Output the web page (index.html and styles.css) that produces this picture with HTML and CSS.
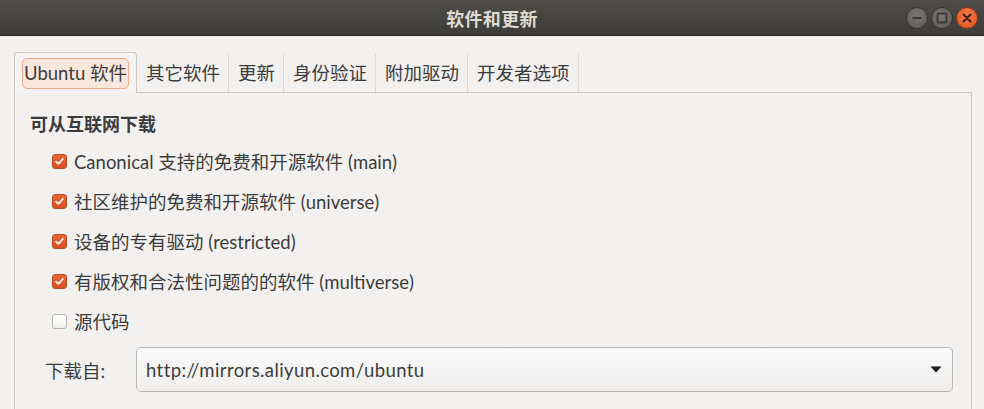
FILE: index.html
```html
<!DOCTYPE html>
<html lang="zh-CN">
<head>
<meta charset="utf-8">
<title>软件和更新</title>
<link rel="stylesheet" href="styles.css">
</head>
<body>
<div class="window">
  <header class="titlebar">
    <span class="title">软件和更新</span>
    <div class="wbuttons">
      <span class="wbtn min"><svg width="20" height="20" viewBox="0 0 20 20"><rect x="5.5" y="9" width="9" height="2" fill="#3a3935"/></svg></span>
      <span class="wbtn max"><svg width="20" height="20" viewBox="0 0 20 20"><rect x="5.5" y="5.5" width="9" height="9" rx="1" fill="none" stroke="#3a3935" stroke-width="1.8"/></svg></span>
      <span class="wbtn close"><svg width="20" height="20" viewBox="0 0 20 20"><path d="M6.5 6.5 L13.5 13.5 M13.5 6.5 L6.5 13.5" stroke="#3b2016" stroke-width="2" stroke-linecap="round"/></svg></span>
    </div>
  </header>
  <main class="content">
    <nav class="tabs">
      <div class="tab active"><span class="focus">Ubuntu 软件</span></div>
      <div class="tab">其它软件</div>
      <div class="tab">更新</div>
      <div class="tab">身份验证</div>
      <div class="tab">附加驱动</div>
      <div class="tab">开发者选项</div>
    </nav>
    <section class="panel">
      <h2 class="heading">可从互联网下载</h2>
      <label class="row"><span class="cb checked"><svg width="15" height="15" viewBox="0 0 15 15"><path d="M3.6 7.6 L6.2 10.2 L11.4 4.6" fill="none" stroke="#fff" stroke-width="2" stroke-linecap="round" stroke-linejoin="round"/></svg></span>Canonical 支持的免费和开源软件 (main)</label>
      <label class="row"><span class="cb checked"><svg width="15" height="15" viewBox="0 0 15 15"><path d="M3.6 7.6 L6.2 10.2 L11.4 4.6" fill="none" stroke="#fff" stroke-width="2" stroke-linecap="round" stroke-linejoin="round"/></svg></span>社区维护的免费和开源软件 (universe)</label>
      <label class="row"><span class="cb checked"><svg width="15" height="15" viewBox="0 0 15 15"><path d="M3.6 7.6 L6.2 10.2 L11.4 4.6" fill="none" stroke="#fff" stroke-width="2" stroke-linecap="round" stroke-linejoin="round"/></svg></span>设备的专有驱动 (restricted)</label>
      <label class="row"><span class="cb checked"><svg width="15" height="15" viewBox="0 0 15 15"><path d="M3.6 7.6 L6.2 10.2 L11.4 4.6" fill="none" stroke="#fff" stroke-width="2" stroke-linecap="round" stroke-linejoin="round"/></svg></span>有版权和合法性问题的的软件 (multiverse)</label>
      <label class="row"><span class="cb"></span>源代码</label>
      <div class="source">
        <span class="src-label">下载自:</span>
        <div class="combo">
          <span class="combo-text">http://mirrors.aliyun.com/ubuntu</span>
          <svg class="arrow" width="12" height="7" viewBox="0 0 12 7"><path d="M0.5 0.5 H11.5 L6 6.5 Z" fill="#1a1a1a"/></svg>
        </div>
      </div>
    </section>
  </main>
</div>
</body>
</html>
```

FILE: styles.css
```css
* { box-sizing: border-box; }
html, body {
  margin: 0;
  padding: 0;
  background: #f2f1f0;
  height: 409px;
  overflow: hidden;
}
body {
  font-family: "Lato", "Noto Sans CJK SC", sans-serif;
  font-size: 18.5px;
  color: #3c3c3c;
}
.window {
  display: flex;
  flex-direction: column;
  height: 409px;
}
.titlebar {
  position: relative;
  height: 36px;
  flex: none;
  background: linear-gradient(#4f4d48, #3d3c38);
  display: flex;
  align-items: center;
  justify-content: center;
  border-bottom: 1px solid #2f2e2b;
}
.title {
  font-weight: bold;
  font-size: 18px;
  color: #dfdbd2;
  font-family: "Noto Sans CJK SC", sans-serif;
  letter-spacing: 0.3px;
}
.wbuttons {
  position: absolute;
  right: 6px;
  top: 7px;
  display: flex;
  gap: 3px;
}
.wbtn {
  width: 22px;
  height: 22px;
  border-radius: 50%;
  display: flex;
  align-items: center;
  justify-content: center;
  background: radial-gradient(circle at 50% 35%, #7a7873, #5c5a55);
  border: 1px solid #34332f;
}
.wbtn.close {
  background: radial-gradient(circle at 50% 35%, #f47a4a, #e1521b);
  border-color: #8a3a18;
}
.content {
  flex: 1;
  display: flex;
  flex-direction: column;
  padding: 16px 12px 0 14px;
  min-height: 0;
}
.tabs {
  display: flex;
  height: 40px;
  flex: none;
  align-items: stretch;
}
.tab {
  display: flex;
  align-items: center;
  padding: 0 9px 0 9px;
  position: relative;
  color: #3c3c3c;
}
.tab:not(.active)::after {
  content: "";
  position: absolute;
  right: 0;
  top: 2px;
  bottom: 0;
  width: 1px;
  background: #dcd9d5;
}
.tab.active {
  border: 1px solid #cdc8c3;
  border-bottom: none;
  border-radius: 4px 4px 0 0;
  background: #f4f3f2;
  padding: 0 7px 0 7px;
  margin-bottom: -1px;
  z-index: 1;
}
.focus {
  display: inline-block;
  border: 1px solid #f0a888;
  background: #f9e6dd;
  border-radius: 5px;
  padding: 2px 1px 3px 1px;
  line-height: 24px;
}
.panel {
  flex: 1;
  border: 1px solid #cdc8c3;
  border-bottom: none;
  background: #f2f1f0;
  padding: 19px 18px 0 15px;
  display: flex;
  flex-direction: column;
}
.heading {
  margin: 0 0 5px 0;
  font-size: 18px;
  font-weight: bold;
  line-height: 24px;
  color: #3c3c3c;
}
.row {
  height: 40px;
  display: flex;
  align-items: center;
  padding-left: 22px;
  gap: 7px;
  flex: none;
}
.cb {
  width: 15px;
  height: 15px;
  border-radius: 3px;
  border: 1px solid #b9b4af;
  background: linear-gradient(#ffffff, #f1f0ef);
  display: flex;
  align-items: center;
  justify-content: center;
  flex: none;
}
.cb.checked {
  border-color: #b8461e;
  background: linear-gradient(#e8673a, #d4511f);
}
.cb.checked svg { display: block; }
.source {
  display: flex;
  align-items: center;
  margin-top: 6px;
  height: 45px;
}
.src-label {
  width: 106px;
  padding-left: 15px;
  flex: none;
}
.combo {
  flex: 1;
  height: 45px;
  border: 1px solid #bab5b0;
  border-radius: 5px;
  background: linear-gradient(#fbfbfb, #efeeed);
  display: flex;
  align-items: center;
  justify-content: space-between;
  padding: 0 10px 0 9px;
}
.combo-text { letter-spacing: 0.4px; }
.arrow { display: block; }
```
